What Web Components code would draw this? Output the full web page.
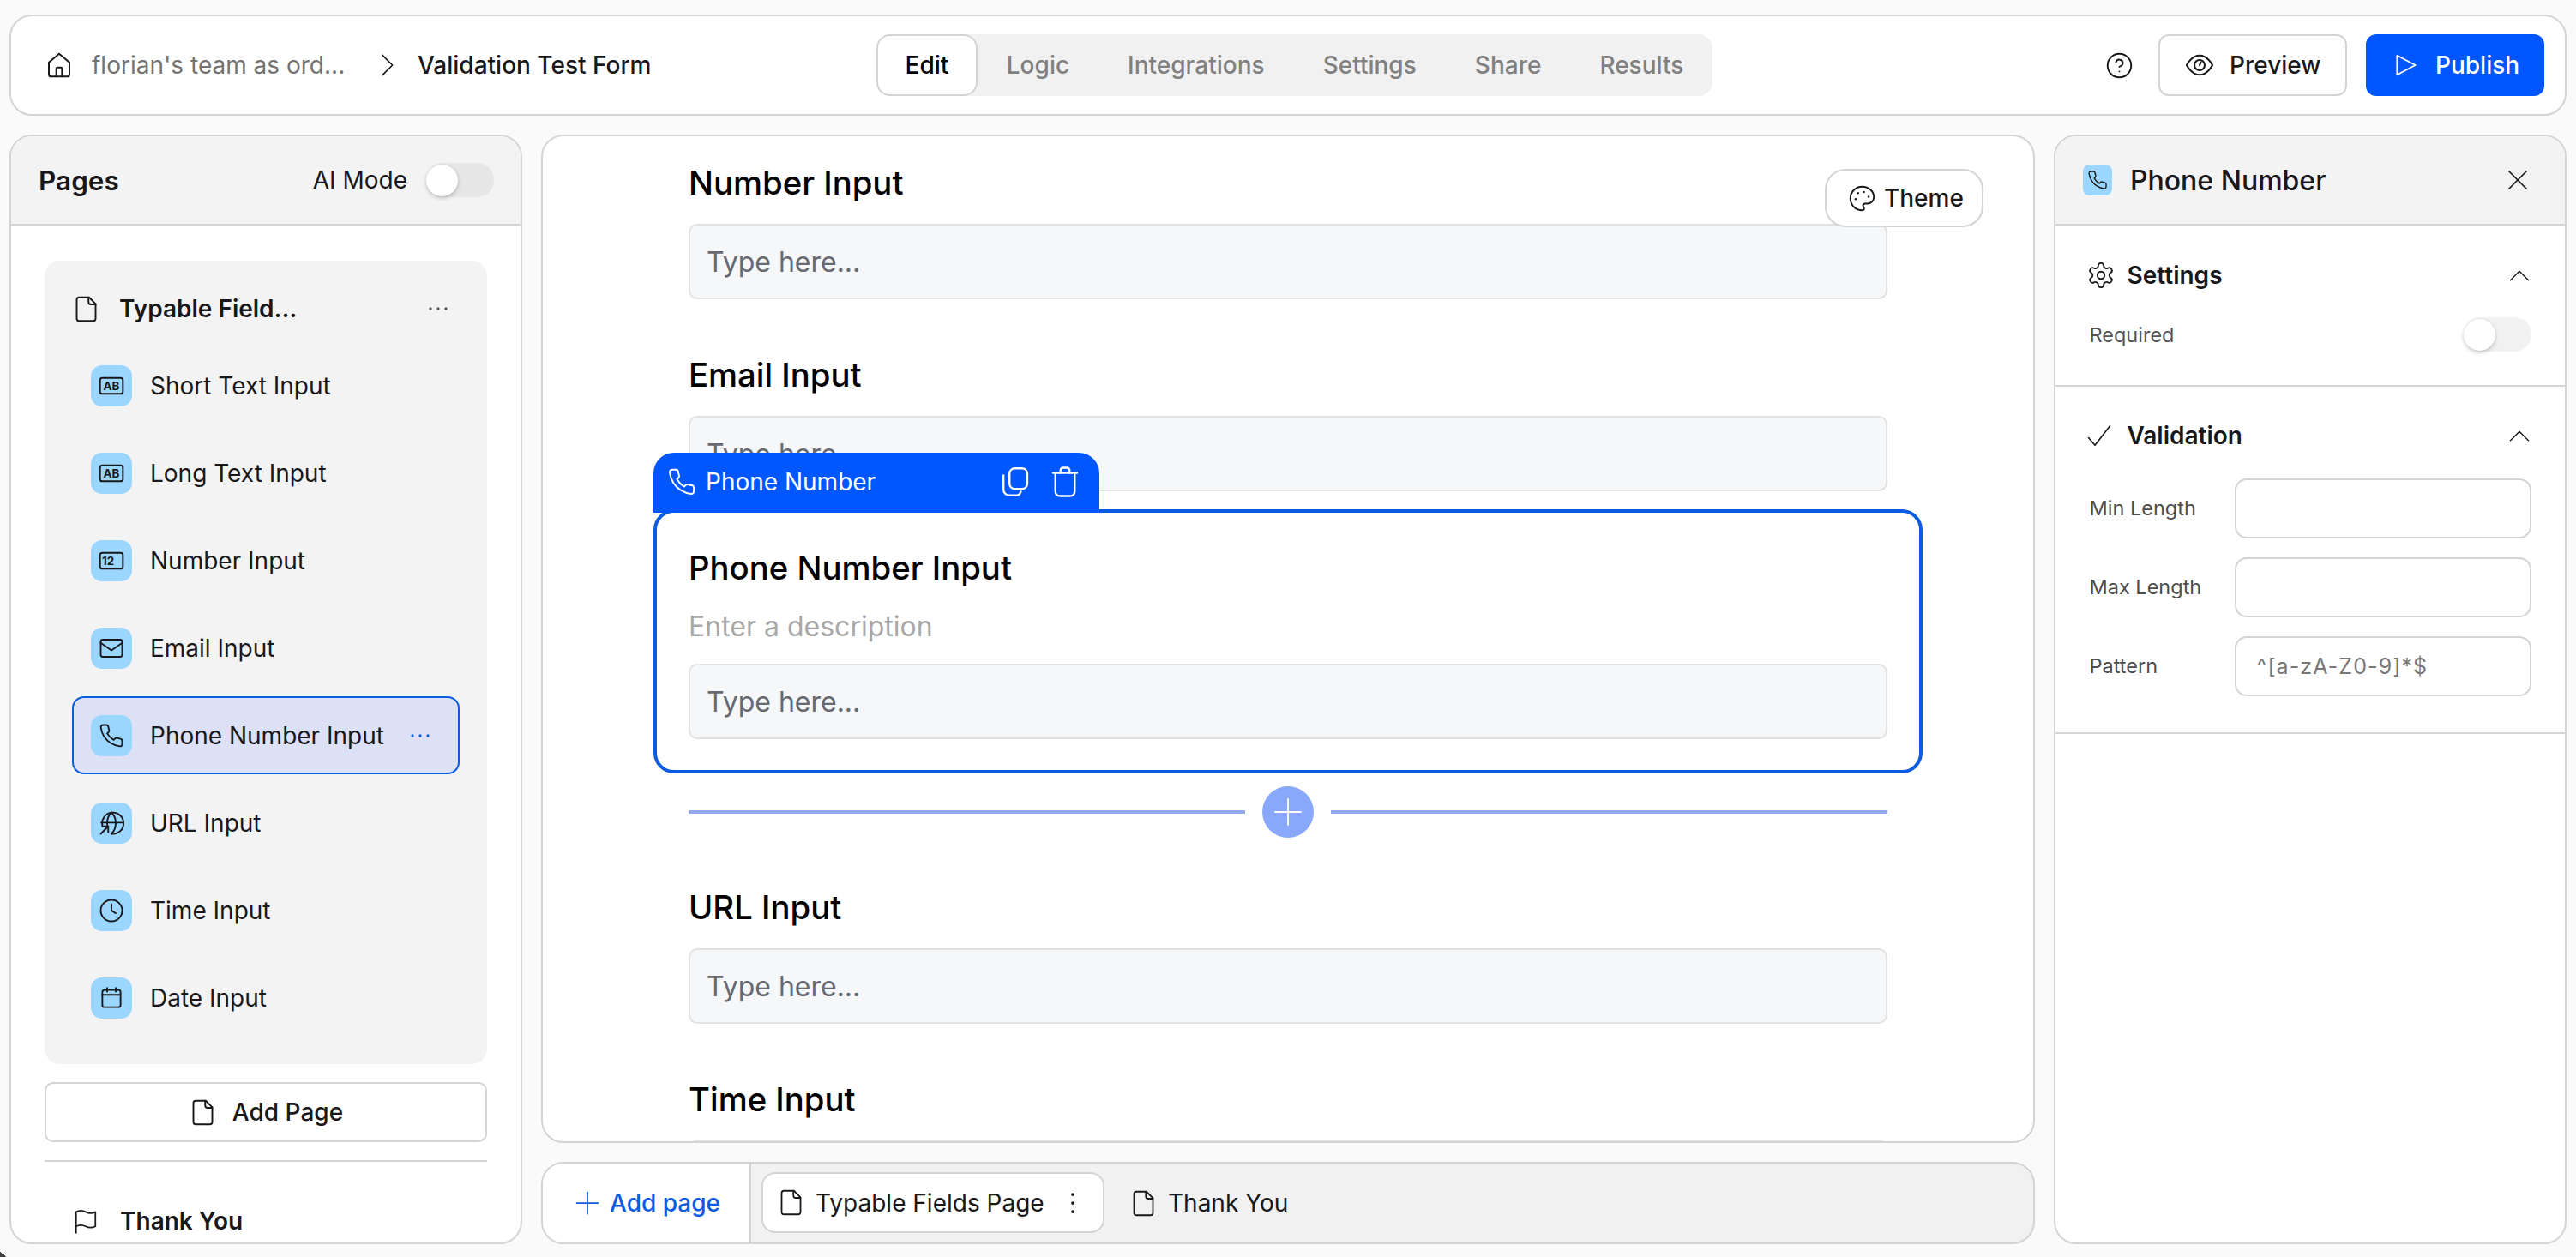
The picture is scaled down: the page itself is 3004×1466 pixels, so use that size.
<!DOCTYPE html>
<html>
<head>
<meta charset="utf-8">
<title>Validation Test Form</title>
<style>
  html, body { margin: 0; padding: 0; background: #fafafa; }
  body { font-family: Inter, "Liberation Sans", sans-serif; font-size: 28px; color: #18181b; }
</style>
</head>
<body>
<app-shell></app-shell>

<script>
const dot = (x, y, r) => `<circle cx="${x}" cy="${y}" r="${r}" fill="currentColor" stroke="none"/>`;
const boxText = (t, x) => `<rect x="2" y="5" width="20" height="14" rx="2"/><text x="${x}" y="15.5" text-anchor="middle" font-size="10" font-weight="700" font-family="Inter, sans-serif" fill="currentColor" stroke="none">${t}</text>`;

const ICONS = {
  home: '<path d="m3 9.500 9-7.500 9 7.500V20a2 2 0 0 1-2 2H5a2 2 0 0 1-2-2z"/><path d="M9.500 22v-7a1 1 0 0 1 1-1h3a1 1 0 0 1 1 1v7"/>',
  chevronRight: '<path d="m6 2 10 10L6 22"/>',
  chevronUp: '<path d="m3 17 9-9 9 9"/>',
  help: '<circle cx="12" cy="12" r="10"/><path d="M9.090 9a3 3 0 0 1 5.830 1c0 2-3 3-3 3"/><path d="M12 17h.01"/>',
  eye: '<path d="M2 12s3.600-7.500 10-7.500S22 12 22 12s-3.600 7.500-10 7.500S2 12 2 12Z"/><circle cx="12" cy="12" r="4"/><path d="M12 12l1-2.200"/>',
  play: '<path d="M3.500 3 20.500 12 3.500 21z"/>',
  file: '<path d="M14.500 2H6a2 2 0 0 0-2 2v16a2 2 0 0 0 2 2h12a2 2 0 0 0 2-2V7.500z"/><path d="M14 2v4a2 2 0 0 0 2 2h4"/>',
  flag: '<path d="M3 23V3.500c3-1.500 6-1.500 9 0s6 1.500 9 0V17c-3 1.500-6 1.500-9 0s-6-1.500-9 0"/>',
  dots: dot(6, 12, 1.1) + dot(12, 12, 1.1) + dot(18, 12, 1.1),
  dotsV: dot(12, 4, 1.5) + dot(12, 12, 1.5) + dot(12, 20, 1.5),
  ab: boxText('AB', 12),
  num: boxText('12', 9),
  mail: '<rect x="2" y="4" width="20" height="16" rx="2"/><path d="m2 7 10 7 10-7"/>',
  phone: '<path d="M22 16.920v3a2 2 0 0 1-2.180 2 19.790 19.790 0 0 1-8.630-3.070 19.500 19.500 0 0 1-6-6 19.790 19.790 0 0 1-3.070-8.670A2 2 0 0 1 4.110 2h3a2 2 0 0 1 2 1.720 12.840 12.840 0 0 0 .7 2.810 2 2 0 0 1-.45 2.110L8.090 9.910a16 16 0 0 0 6 6l1.270-1.270a2 2 0 0 1 2.110-.45 12.840 12.840 0 0 0 2.810.7A2 2 0 0 1 22 16.920z"/>',
  globe: '<path d="M3.500 14A10 10 0 1 1 12 22"/><path d="M2.500 11.500h19.500"/><path d="M12 2c3 3 4 6.500 4 10s-1 7-4 10"/><path d="M12 2c-3 3-4 6.500-4 10 0 1 .1 2 .3 3"/><path d="M2 22l7-7"/><path d="M3.500 15H9v5.500"/>',
  clock: '<circle cx="12" cy="12" r="10"/><path d="M12 6v6l4 2.500"/>',
  calendar: '<rect x="3.500" y="4.500" width="17" height="16" rx="2"/><path d="M8 2.500V6"/><path d="M16 2.500V6"/><path d="M3.500 9h17"/>',
  close: '<path d="M4 4l16 16"/><path d="M20 4 4 20"/>',
  gear: '<path d="M12.220 2h-.44a2 2 0 0 0-2 2v.18a2 2 0 0 1-1 1.730l-.43.25a2 2 0 0 1-2 0l-.15-.08a2 2 0 0 0-2.730.73l-.22.38a2 2 0 0 0 .73 2.730l.15.1a2 2 0 0 1 1 1.720v.51a2 2 0 0 1-1 1.740l-.15.09a2 2 0 0 0-.73 2.730l.22.38a2 2 0 0 0 2.730.73l.15-.08a2 2 0 0 1 2 0l.43.25a2 2 0 0 1 1 1.730V20a2 2 0 0 0 2 2h.44a2 2 0 0 0 2-2v-.18a2 2 0 0 1 1-1.730l.43-.25a2 2 0 0 1 2 0l.15.08a2 2 0 0 0 2.730-.73l.22-.39a2 2 0 0 0-.73-2.730l-.15-.08a2 2 0 0 1-1-1.740v-.5a2 2 0 0 1 1-1.740l.15-.09a2 2 0 0 0 .73-2.730l-.22-.38a2 2 0 0 0-2.730-.73l-.15.08a2 2 0 0 1-2 0l-.43-.25a2 2 0 0 1-1-1.730V4a2 2 0 0 0-2-2z"/><circle cx="12" cy="12" r="3"/>',
  check: '<path d="M2 14l6 7L22 3"/>',
  palette: '<path d="M12 2C6.500 2 2 6.500 2 12s4.500 10 10 10c.926 0 1.648-.746 1.648-1.688 0-.437-.18-.835-.437-1.125-.29-.289-.438-.652-.438-1.125a1.640 1.640 0 0 1 1.668-1.668h1.996c3.051 0 5.555-2.503 5.555-5.554C21.965 6.012 17.461 2 12 2z"/>' + dot(13.5, 6.5, .9) + dot(17.5, 10.5, .9) + dot(8.5, 7.5, .9) + dot(6.5, 12.5, .9),
  copy: '<rect x="7.500" y="1.500" width="13.800" height="16" rx="4"/><path d="M2.800 7v11a4.500 4.500 0 0 0 4.500 4.500h5a4 4 0 0 0 4-3"/>',
  trash: '<path d="M2.700 5h18.600"/><path d="M4.500 5v14.500A3.500 3.500 0 0 0 8 23h8a3.500 3.500 0 0 0 3.500-3.500V5"/><path d="M8.500 5V3a2 2 0 0 1 2-2h3a2 2 0 0 1 2 2v2"/>',
  plus: '<path d="M12 2v20"/><path d="M2 12h20"/>'
};

class UiIcon extends HTMLElement {
  connectedCallback() {
    const size = this.getAttribute('size') || 28;
    const sw = this.getAttribute('stroke') || 1.5;
    this.attachShadow({ mode: 'open' }).innerHTML = `
      <style>
        :host { display: inline-flex; flex: none; width: ${size}px; height: ${size}px; }
        svg { width: 100%; height: 100%; display: block; }
      </style>
      <svg viewBox="0 0 24 24" fill="none" stroke="currentColor" stroke-width="${sw}" stroke-linecap="round" stroke-linejoin="round">${ICONS[this.getAttribute('name')] || ''}</svg>`;
  }
}
customElements.define('ui-icon', UiIcon);

class ToggleSwitch extends HTMLElement {
  connectedCallback() {
    const bg = this.getAttribute('track') || '#e6e6e6';
    this.attachShadow({ mode: 'open' }).innerHTML = `
      <style>
        :host { display: inline-flex; flex: none; width: 79px; height: 40px; border-radius: 20px; background: ${bg}; align-items: center; }
        i { display: block; width: 37px; height: 37px; border-radius: 50%; background: #fff; box-shadow: 0 2px 5px rgba(0,0,0,.22); }
      </style><i></i>`;
  }
}
customElements.define('toggle-switch', ToggleSwitch);

class TopBar extends HTMLElement {
  constructor() {
    super();
    this.attachShadow({ mode: 'open' }).innerHTML = `
      <style>
        :host { display: flex; align-items: center; box-sizing: border-box; height: 118px; background: #fff; border: 2px solid #d4d4d4; border-radius: 26px; font-weight: 500; }
        .crumbs { width: 1009px; flex: none; box-sizing: border-box; padding-left: 40px; display: flex; align-items: center; }
        .team { color: #737373; font-weight: 400; margin-left: 22px; width: 332px; white-space: nowrap; }
        .crumbs ui-icon.sep { margin-right: 20px; }
        .tabs { display: flex; height: 72px; background: #f1f1f1; border-radius: 16px; color: #808080; width: 975px; box-sizing: border-box; }
        .tabs span { display: flex; align-items: center; padding: 0 34px; }
        .tabs .on { background: #fff; color: #000; border: 2px solid #d4d4d4; border-radius: 16px; padding: 0 31.5px; }
        .actions { margin-left: auto; padding-right: 24px; display: flex; align-items: center; }
        .btn { height: 72px; box-sizing: border-box; display: flex; align-items: center; border-radius: 12px; }
        .preview { border: 2px solid #d4d4d4; width: 220px; padding-left: 28px; gap: 17px; margin-left: 29px; color: #18181b; }
        .publish { background: #0057ff; color: #fff; width: 208px; padding-left: 32px; gap: 19px; margin-left: 22px; }
      </style>
      <div class="crumbs">
        <ui-icon name="home" size="32" stroke="1.5"></ui-icon>
        <span class="team">florian's team as ord...</span>
        <ui-icon class="sep" name="chevronRight" size="28" stroke="1.4"></ui-icon>
        <span>Validation Test Form</span>
      </div>
      <div class="tabs">
        <span class="on">Edit</span><span>Logic</span><span>Integrations</span><span>Settings</span><span>Share</span><span>Results</span>
      </div>
      <div class="actions">
        <ui-icon name="help" size="33" stroke="1.4"></ui-icon>
        <div class="btn preview"><ui-icon name="eye" size="36" stroke="1.4"></ui-icon>Preview</div>
        <div class="btn publish"><ui-icon name="play" size="30" stroke="1.5"></ui-icon>Publish</div>
      </div>`;
  }
}
customElements.define('top-bar', TopBar);

class FieldItem extends HTMLElement {
  connectedCallback() {
    const on = this.hasAttribute('selected');
    this.attachShadow({ mode: 'open' }).innerHTML = `
      <style>
        :host { display: flex; align-items: center; box-sizing: border-box; height: 91px; padding-left: 20px; border: 2px solid ${on ? '#0b5ce0' : 'transparent'}; border-radius: 14px; background: ${on ? '#dde1f5' : 'transparent'}; }
        .tile { width: 48px; height: 48px; flex: none; border-radius: 13px; background: #9bd6ff; display: flex; align-items: center; justify-content: center; color: #18181b; }
        .text { margin-left: 21px; flex: 1; white-space: nowrap; }
        .more { color: #0b5ce0; margin-right: 26px; }
      </style>
      <span class="tile"><ui-icon name="${this.getAttribute('icon')}" size="${this.getAttribute('isize') || 30}" stroke="1.5"></ui-icon></span>
      <span class="text"><slot></slot></span>
      ${on ? '<ui-icon class="more" name="dots" size="36"></ui-icon>' : ''}`;
  }
}
customElements.define('field-item', FieldItem);

class PagesPanel extends HTMLElement {
  constructor() {
    super();
    this.attachShadow({ mode: 'open' }).innerHTML = `
      <style>
        :host { display: flex; flex-direction: column; box-sizing: border-box; background: #fff; border: 2px solid #d4d4d4; border-radius: 26px; overflow: hidden; }
        header { flex: none; height: 104px; box-sizing: border-box; background: #f3f3f3; border-bottom: 2px solid #d4d4d4; display: flex; align-items: center; padding: 0 31px 0 32px; }
        header b { font-size: 31.5px; font-weight: 600; flex: 1; }
        header span { margin-right: 22px; }
        .body { flex: 1; padding: 41px 39px 0 39px; display: flex; flex-direction: column; }
        .group { background: #f3f3f3; border-radius: 18px; padding: 32px; display: flex; flex-direction: column; gap: 11px; }
        .head { display: flex; align-items: center; height: 48px; margin-bottom: 9px; font-weight: 600; }
        .head ui-icon:first-child { margin-right: 22px; }
        .head span { flex: 1; }
        .head .more { color: #555; margin-right: 7px; }
        .add { margin-top: 21px; height: 70px; box-sizing: border-box; border: 2px solid #d4d4d4; border-radius: 10px; display: flex; align-items: center; justify-content: center; gap: 18px; font-weight: 500; }
        hr { border: 0; height: 2px; background: #d4d4d4; margin: 21px 0 0; }
        .thanks { display: flex; align-items: center; height: 30px; margin-top: 54px; padding-left: 33px; gap: 25px; font-weight: 600; }
      </style>
      <header><b>Pages</b><span>AI Mode</span><toggle-switch></toggle-switch></header>
      <div class="body">
        <div class="group">
          <div class="head"><ui-icon name="file" size="33" stroke="1.4"></ui-icon><span>Typable Field...</span><ui-icon class="more" name="dots" size="36"></ui-icon></div>
          <slot></slot>
        </div>
        <div class="add"><ui-icon name="file" size="33" stroke="1.4"></ui-icon>Add Page</div>
        <hr>
        <div class="thanks"><ui-icon name="flag" size="30" stroke="1.4"></ui-icon>Thank You</div>
      </div>`;
  }
}
customElements.define('pages-panel', PagesPanel);

class FormField extends HTMLElement {
  connectedCallback() {
    const desc = this.getAttribute('description');
    const blank = this.hasAttribute('blank');
    this.attachShadow({ mode: 'open' }).innerHTML = `
      <style>
        :host { display: block; }
        .title { font-size: 38.3px; font-weight: 500; color: #000; line-height: 44px; }
        .desc { font-size: 32px; color: #a8a8a8; line-height: 40px; margin-top: 27px; margin-bottom: 23px; }
        .nodesc { height: ${blank ? 25 : 26}px; }
        .input { height: 88px; box-sizing: border-box; background: #f6f7f9; border: 2px solid #e2e2e2; border-radius: 10px; padding-left: 19px; display: flex; align-items: center; color: #666a70; font-size: 32px; }
      </style>
      <div class="title"><slot></slot></div>
      ${desc ? `<div class="desc">${desc}</div>` : '<div class="nodesc"></div>'}
      <div class="input">${blank ? '' : 'Type here...'}</div>`;
  }
}
customElements.define('form-field', FormField);

class SelectedCard extends HTMLElement {
  constructor() {
    super();
    this.attachShadow({ mode: 'open' }).innerHTML = `
      <style>
        :host { display: block; position: relative; box-sizing: border-box; margin: -45px -41px 0; border: 4px solid #0b5ce0; border-radius: 24px; padding: 42px 37px 36px; }
        .tag { position: absolute; left: -4px; top: -70px; width: 520px; height: 70px; box-sizing: border-box; background: #0057ff; color: #fff; border-radius: 24px 24px 0 0; display: flex; align-items: center; padding: 0 0 2px 16px; }
        .tag span { margin-left: 11px; flex: 1; }
        .tag ui-icon.copy, .tag ui-icon.trash { margin-right: 22px; }
      </style>
      <div class="tag">
        <ui-icon name="phone" size="34" stroke="1.4"></ui-icon><span>Phone Number</span>
        <ui-icon class="copy" name="copy" size="36" stroke="1.6"></ui-icon><ui-icon class="trash" name="trash" size="36" stroke="1.6"></ui-icon>
      </div>
      <slot></slot>`;
  }
}
customElements.define('selected-card', SelectedCard);

class InsertRow extends HTMLElement {
  constructor() {
    super();
    this.attachShadow({ mode: 'open' }).innerHTML = `
      <style>
        :host { display: flex; align-items: center; gap: 20px; height: 60px; margin: 15px 0 59px; }
        i { flex: 1; height: 4px; background: #8fa9ea; }
        span { width: 60px; height: 60px; border-radius: 50%; background: #89a8fb; color: #fff; display: flex; align-items: center; justify-content: center; }
      </style>
      <i></i><span><ui-icon name="plus" size="36" stroke="1.2"></ui-icon></span><i></i>`;
  }
}
customElements.define('insert-row', InsertRow);

class FormCanvas extends HTMLElement {
  constructor() {
    super();
    this.attachShadow({ mode: 'open' }).innerHTML = `
      <style>
        :host { display: block; position: relative; box-sizing: border-box; height: 1176px; background: #fff; border: 2px solid #d4d4d4; border-radius: 26px; overflow: hidden; }
        .scroll { display: flex; flex-direction: column; padding: 32px 170px 0; gap: 66px; }
        .theme { position: absolute; top: 38px; right: 58px; height: 68px; width: 185px; box-sizing: border-box; background: #fff; border: 2px solid #d4d4d4; border-radius: 24px; display: flex; align-items: center; padding-left: 25px; gap: 9px; font-weight: 500; }
      </style>
      <div class="scroll"><slot></slot></div>
      <div class="theme"><ui-icon name="palette" size="33" stroke="1.4"></ui-icon>Theme</div>`;
  }
}
customElements.define('form-canvas', FormCanvas);

class PageTabs extends HTMLElement {
  constructor() {
    super();
    this.attachShadow({ mode: 'open' }).innerHTML = `
      <style>
        :host { display: flex; box-sizing: border-box; height: 96px; background: #f1f1f1; border: 2px solid #d4d4d4; border-radius: 26px; overflow: hidden; }
        .add { width: 243px; flex: none; box-sizing: border-box; background: #fff; border-right: 2px solid #d4d4d4; display: flex; align-items: center; padding-left: 37px; gap: 11px; color: #0b5ce0; font-weight: 500; }
        .tab { display: flex; align-items: center; white-space: nowrap; }
        .cur { margin: 10px 0 11px 12px; width: 400px; box-sizing: border-box; background: #fff; border: 2px solid #d4d4d4; border-radius: 16px; padding-left: 16px; gap: 12px; }
        .cur span { flex: 1; }
        .cur ui-icon:last-child { margin-right: 20px; }
        .next { margin-left: 29px; gap: 12px; }
      </style>
      <div class="add"><ui-icon name="plus" size="30" stroke="1.4"></ui-icon>Add page</div>
      <div class="tab cur"><ui-icon name="file" size="33" stroke="1.3"></ui-icon><span>Typable Fields Page</span><ui-icon name="dotsV" size="30"></ui-icon></div>
      <div class="tab next"><ui-icon name="file" size="33" stroke="1.3"></ui-icon><span>Thank You</span></div>`;
  }
}
customElements.define('page-tabs', PageTabs);

class PropsPanel extends HTMLElement {
  constructor() {
    super();
    this.attachShadow({ mode: 'open' }).innerHTML = `
      <style>
        :host { display: flex; flex-direction: column; box-sizing: border-box; background: #fff; border: 2px solid #d4d4d4; border-radius: 26px; overflow: hidden; }
        header { flex: none; height: 104px; box-sizing: border-box; background: #f3f3f3; border-bottom: 2px solid #d4d4d4; display: flex; align-items: center; padding: 0 40px 0 32px; font-size: 32px; font-weight: 500; }
        .tile { width: 34px; height: 36px; border-radius: 8px; background: #9bd6ff; display: flex; align-items: center; justify-content: center; margin-right: 21px; }
        header span.t { flex: 1; }
        section { border-bottom: 2px solid #d4d4d4; padding: 0 39px 0 39.5px; box-sizing: border-box; }
        .sec-head { display: flex; align-items: center; font-weight: 600; height: 40px; margin-left: -4px; }
        .sec-head span { flex: 1; }
        .settings { height: 188px; padding-top: 38px; }
        .settings .sec-head span { margin-left: 14px; }
        .validation { height: 405px; padding-top: 37px; }
        .validation .sec-head span { margin-left: 18px; }
        .req { display: flex; align-items: center; justify-content: space-between; margin-top: 29px; font-size: 23.5px; color: #555; }
        .row { display: flex; align-items: center; margin-top: 22px; font-size: 23.5px; color: #4d4d4d; }
        .sec-head + .row { margin-top: 29.5px; }
        .row span { width: 169px; flex: none; }
        .box { width: 346px; height: 70px; box-sizing: border-box; border: 2px solid #d4d4d4; border-radius: 14px; display: flex; align-items: center; padding-left: 24px; color: #777; font-size: 25px; letter-spacing: 1.1px; }
      </style>
      <header><span class="tile"><ui-icon name="phone" size="24" stroke="1.4"></ui-icon></span><span class="t">Phone Number</span><ui-icon name="close" size="30" stroke="1.4"></ui-icon></header>
      <section class="settings">
        <div class="sec-head"><ui-icon name="gear" size="34" stroke="1.3"></ui-icon><span>Settings</span><ui-icon name="chevronUp" size="28" stroke="1.2"></ui-icon></div>
        <div class="req">Required<toggle-switch track="#f1f1f1"></toggle-switch></div>
      </section>
      <section class="validation">
        <div class="sec-head"><ui-icon name="check" size="30" stroke="1.3"></ui-icon><span>Validation</span><ui-icon name="chevronUp" size="28" stroke="1.2"></ui-icon></div>
        <div class="row"><span>Min Length</span><div class="box"></div></div>
        <div class="row"><span>Max Length</span><div class="box"></div></div>
        <div class="row"><span>Pattern</span><div class="box">^[a-zA-Z0-9]*$</div></div>
      </section>`;
  }
}
customElements.define('props-panel', PropsPanel);

class AppShell extends HTMLElement {
  constructor() {
    super();
    this.attachShadow({ mode: 'open' }).innerHTML = `
      <style>
        :host { display: flex; flex-direction: column; position: relative; box-sizing: border-box; height: 1466px; padding: 17px 11px 15px 11px; gap: 22px; overflow: hidden; }
        :host::after { content: ""; position: absolute; left: 0; bottom: 0; width: 8px; height: 6px; background: linear-gradient(to top right, #444 50%, transparent 50%); }
        .main { flex: 1; min-height: 0; display: grid; grid-template-columns: 598px 1742px 598px; column-gap: 22px; }
        .center { display: flex; flex-direction: column; gap: 22px; min-height: 0; }
      </style>
      <top-bar></top-bar>
      <div class="main">
        <pages-panel>
          <field-item icon="ab" isize="32">Short Text Input</field-item>
          <field-item icon="ab" isize="32">Long Text Input</field-item>
          <field-item icon="num" isize="32">Number Input</field-item>
          <field-item icon="mail">Email Input</field-item>
          <field-item icon="phone" selected>Phone Number Input</field-item>
          <field-item icon="globe">URL Input</field-item>
          <field-item icon="clock">Time Input</field-item>
          <field-item icon="calendar">Date Input</field-item>
        </pages-panel>
        <div class="center">
          <form-canvas>
            <form-field>Number Input</form-field>
            <form-field>Email Input</form-field>
            <div>
              <selected-card><form-field description="Enter a description">Phone Number Input</form-field></selected-card>
              <insert-row></insert-row>
              <form-field>URL Input</form-field>
            </div>
            <form-field blank>Time Input</form-field>
          </form-canvas>
          <page-tabs></page-tabs>
        </div>
        <props-panel></props-panel>
      </div>`;
  }
}
customElements.define('app-shell', AppShell);
</script>
</body>
</html>
